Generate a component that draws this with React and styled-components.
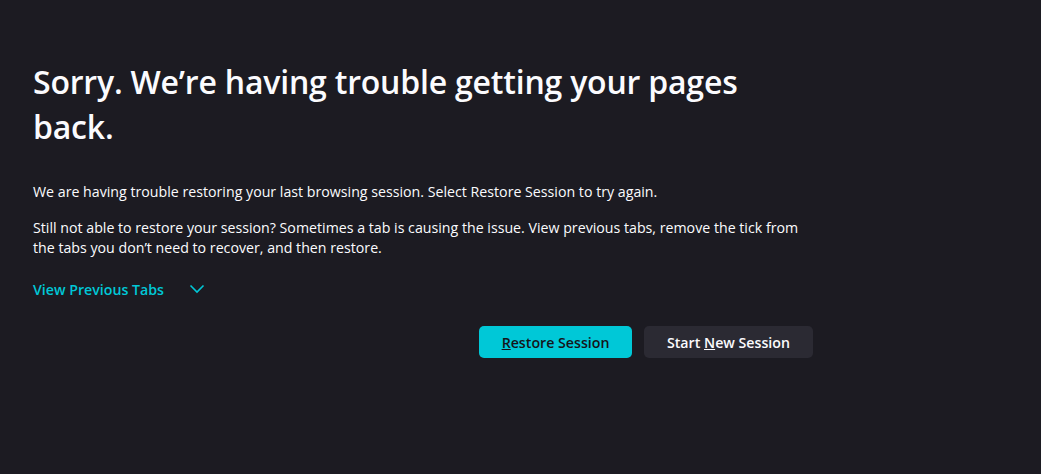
import React from "react";
import styled, { createGlobalStyle } from "styled-components";

const Global = createGlobalStyle`
  html, body { margin: 0; padding: 0; background: #1c1b22; }
  body { font-family: "Open Sans", "Noto Sans", sans-serif; color: #fbfbfe; }
`;

const Page = styled.div`
  min-height: 474px;
  box-sizing: border-box;
  padding: 59px 0 0 33px;
`;

const Container = styled.div`
  width: 780px;
  display: flex;
  flex-direction: column;
`;

const Title = styled.h1`
  margin: 0 0 33px;
  font-size: 32px;
  font-weight: 600;
  line-height: 45px;
  letter-spacing: -0.2px;
`;

const Para = styled.p`
  margin: 0 0 ${(p) => p.$mb || 0}px;
  font-size: 14.2px;
  line-height: 19.5px;
`;

const Toggle = styled.button`
  align-self: flex-start;
  margin-top: 22px;
  height: 20px;
  display: flex;
  align-items: center;
  gap: 25px;
  background: none;
  border: none;
  padding: 0;
  color: #00c8d7;
  font-family: inherit;
  font-size: 14.2px;
  font-weight: 600;
  cursor: pointer;
`;

const Actions = styled.div`
  display: flex;
  justify-content: flex-end;
  gap: 12px;
  margin-top: 27px;
`;

const Button = styled.button`
  height: 32px;
  padding: 0 ${(p) => (p.$primary ? 22.5 : 23)}px;
  border: none;
  border-radius: 5px;
  background: ${(p) => (p.$primary ? "#00c8d7" : "#2b2a33")};
  color: ${(p) => (p.$primary ? "#15141a" : "#fbfbfe")};
  font-family: inherit;
  font-size: 14.2px;
  font-weight: 600;
  cursor: pointer;
`;

const U = styled.span`
  text-decoration: underline;
`;

export default function App() {
  return (
    <>
      <Global />
      <Page>
        <Container>
          <Title>Sorry. We’re having trouble getting your pages back.</Title>
          <Para $mb={16.5}>
            We are having trouble restoring your last browsing session. Select Restore Session to try again.
          </Para>
          <Para>
            Still not able to restore your session? Sometimes a tab is causing the issue. View previous tabs, remove the tick from the tabs you don’t need to recover, and then restore.
          </Para>
          <Toggle>
            View Previous Tabs
            <svg width="16" height="10" viewBox="0 0 16 10" fill="none">
              <path d="M1.5 1.5 L8 8 L14.5 1.5" stroke="#00c8d7" strokeWidth="1.6" />
            </svg>
          </Toggle>
          <Actions>
            <Button $primary>
              <U>R</U>estore Session
            </Button>
            <Button>
              Start <U>N</U>ew Session
            </Button>
          </Actions>
        </Container>
      </Page>
    </>
  );
}
